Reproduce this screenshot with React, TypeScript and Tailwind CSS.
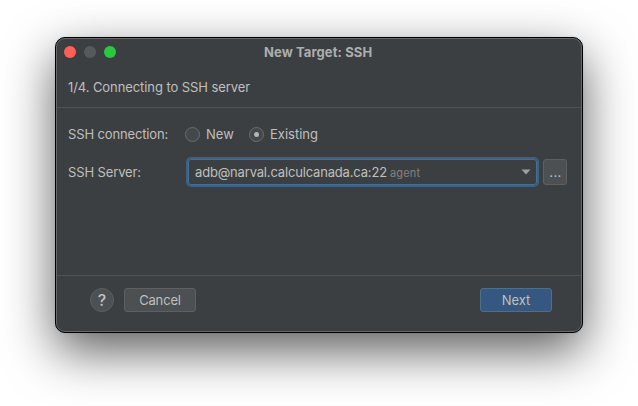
function Radio({ label, checked }: { label: string; checked?: boolean }) {
  return (
    <div className="flex h-[15px] items-center gap-1.5">
      <span className="flex size-[15px] items-center justify-center rounded-full border border-[#6b6e6e] bg-[#43494a]">
        {checked && <span className="size-[5px] rounded-full bg-[#b4b5b5]" />}
      </span>
      <span className="pb-px">{label}</span>
    </div>
  );
}

export default function App() {
  return (
    <main className="h-[406px] w-[638px] overflow-hidden bg-white pt-[37px] pl-[55px] font-['Inter','Liberation_Sans',sans-serif] text-[13px] leading-4 whitespace-nowrap text-[#bfbfbf]">
      <section className="flex h-[296px] w-[528px] flex-col overflow-hidden rounded-[10px] border border-black bg-[#3c3f41] shadow-[0_18px_50px_rgba(0,0,0,0.64),0_0_3px_rgba(0,0,0,0.08)]">
        <div className="flex flex-1 flex-col rounded-[9px] border border-[#66686a]">
          <header className="flex h-[69px] shrink-0 flex-col border-b border-[#515456]">
            <div className="flex h-[26px] items-center pl-[7px]">
              <div className="flex w-[200px] gap-2">
                <span className="size-3 rounded-full bg-[#ff5f57]" />
                <span className="size-3 rounded-full bg-[#58595b]" />
                <span className="size-3 rounded-full bg-[#28c840]" />
              </div>
              <h1 className="font-bold tracking-[0.1px] text-[#adaeaf]">New Target: SSH</h1>
            </div>
            <p className="mt-[14px] ml-[11px] tracking-[-0.08px]">1/4. Connecting to SSH server</p>
          </header>

          <div className="flex flex-1 flex-col pl-[11px]">
            <div className="mt-[19px] flex h-[15px] items-center">
              <span className="w-[117px] pb-px tracking-[-0.14px]">SSH connection:</span>
              <div className="w-[64px]">
                <Radio label="New" />
              </div>
              <Radio label="Existing" checked />
            </div>
            <div className="mt-[15px] flex h-[30px] items-center">
              <span className="w-[118px] tracking-[-0.12px]">SSH Server:</span>
              <div className="flex h-[30px] w-[353px] rounded-[5px] border-2 border-[#3d6185]">
                <div className="flex w-full items-center rounded-[3px] border border-[#466d94] pr-[5.5px] pl-[6px]">
                  <span className="tracking-[-0.17px]">adb@narval.calculcanada.ca:22</span>
                  <span className="ml-[3px] pt-px text-[11px] tracking-[0.2px] text-[#808182]">agent</span>
                  <svg className="ml-auto" width="10" height="6" viewBox="0 0 10 6">
                    <path d="M0.5 0.5H9.5L5 5.5Z" fill="#9da0a2" />
                  </svg>
                </div>
              </div>
              <button className="ml-1 h-[26px] w-6 rounded-[3px] border border-[#5e6060] bg-[#4c5052] pl-px tracking-[0.4px]">...</button>
            </div>
          </div>

          <footer className="flex h-[56px] shrink-0 items-start border-t border-[#515456] pt-3 pr-[29px] pl-[33px]">
            <button className="flex size-6 items-center justify-center rounded-full border border-[#5e6060] bg-[#4c5052] text-[16px] font-medium">?</button>
            <button className="ml-[10px] h-6 w-[72px] rounded-[3px] border border-[#5e6060] bg-[#4c5052] tracking-[-0.15px]">Cancel</button>
            <button className="ml-auto h-6 w-[72px] rounded-[3px] border border-[#4c708c] bg-[#365880]">Next</button>
          </footer>
        </div>
      </section>
    </main>
  );
}
